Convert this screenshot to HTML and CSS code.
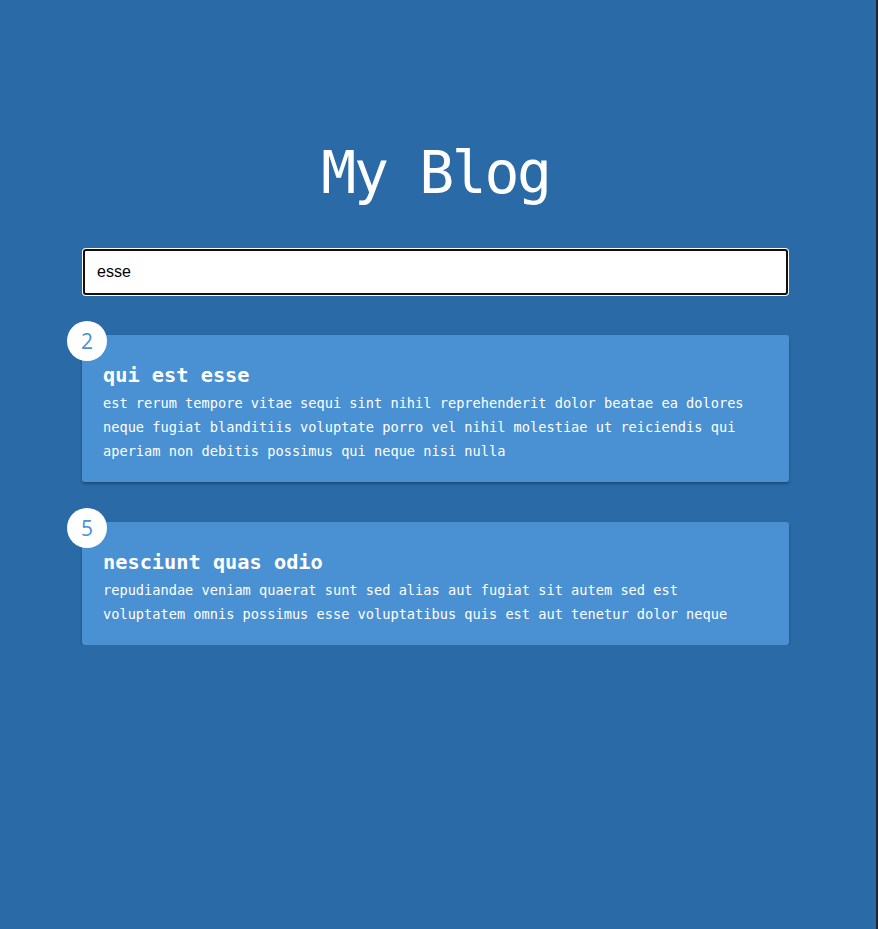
FILE: index.html
```html
<!DOCTYPE html>
<html lang="en">
<head>
<meta charset="utf-8">
<title>My Blog</title>
<link rel="stylesheet" href="styles.css">
</head>
<body>
<div class="page">
  <h1 class="title">My Blog</h1>
  <input class="search" type="text" value="esse" autofocus>
  <div class="posts">
    <article class="card">
      <span class="badge">2</span>
      <h2 class="card-title">qui est esse</h2>
      <p class="card-body">est rerum tempore vitae sequi sint nihil reprehenderit dolor beatae ea dolores neque fugiat blanditiis voluptate porro vel nihil molestiae ut reiciendis qui aperiam non debitis possimus qui neque nisi nulla</p>
    </article>
    <article class="card">
      <span class="badge">5</span>
      <h2 class="card-title">nesciunt quas odio</h2>
      <p class="card-body">repudiandae veniam quaerat sunt sed alias aut fugiat sit autem sed est voluptatem omnis possimus esse voluptatibus quis est aut tenetur dolor neque</p>
    </article>
  </div>
</div>
</body>
</html>
```
FILE: styles.css
```css
html {
  background: #2a6ba7;
  min-height: 100%;
  box-sizing: border-box;
  border-right: 2px solid #262626;
}
body {
  margin: 0;
  font-family: "DejaVu Sans Mono", "Liberation Mono", monospace;
  color: #fff;
}
.page {
  width: 707px;
  margin-left: 82px;
  padding-top: 138px;
}
.title {
  margin: 0 0 41px;
  font-size: 58px;
  line-height: 70px;
  letter-spacing: -2.3px;
  font-weight: normal;
  text-align: center;
}
.search {
  display: block;
  box-sizing: border-box;
  width: 705px;
  height: 46px;
  margin: 0 1px;
  padding: 0 12px;
  border: 2px solid #111;
  border-radius: 3px;
  box-shadow: 0 0 0 1px #fff;
  outline: none;
  background: #fff;
  font-family: "Liberation Sans", Arial, sans-serif;
  font-size: 16px;
  color: #000;
  caret-color: #000;
}
.posts {
  margin-top: 40px;
  display: flex;
  flex-direction: column;
  gap: 40px;
}
.card {
  position: relative;
  background: #4a91d3;
  border-radius: 3px;
  box-shadow: 0 2px 3px rgba(0, 0, 0, 0.3);
  padding: 28px 30px 19px 21px;
}
.badge {
  position: absolute;
  left: -15px;
  top: -14px;
  width: 40px;
  height: 40px;
  border-radius: 50%;
  background: #fff;
  color: #4a91d3;
  font-family: "Open Sans", "Noto Sans", sans-serif;
  font-size: 21px;
  line-height: 40px;
  text-align: center;
}
.card-title {
  margin: 0 0 4px;
  font-size: 20.3px;
  line-height: 24px;
  font-weight: bold;
}
.card-body {
  margin: 0;
  font-size: 13.65px;
  line-height: 24px;
}
```
